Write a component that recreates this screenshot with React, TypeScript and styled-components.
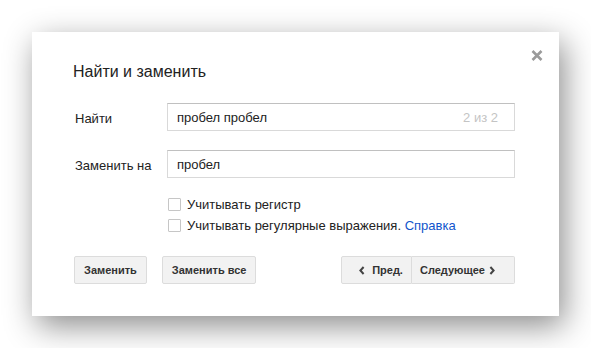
import React from "react";
import styled, { createGlobalStyle } from "styled-components";

const Global = createGlobalStyle`
  html, body {
    margin: 0;
    padding: 0;
    background: #fff;
  }
  body {
    font-family: "Liberation Sans", Arial, sans-serif;
  }
`;

const ChevronLeft = () => (
  <svg width="6" height="9" viewBox="0 0 6 9">
    <polyline points="4.6,1 1.4,4.5 4.6,8" fill="none" stroke="#444" strokeWidth="2" />
  </svg>
);

const ChevronRight = () => (
  <svg width="6" height="9" viewBox="0 0 6 9">
    <polyline points="1.4,1 4.6,4.5 1.4,8" fill="none" stroke="#444" strokeWidth="2" />
  </svg>
);

const App = () => {
  return (
    <Page>
      <Global />
      <Dialog>
        <Close aria-label="Закрыть">
          <svg width="12" height="11" viewBox="0 0 12 11">
            <path d="M1.5 1 L10.5 10 M10.5 1 L1.5 10" stroke="#9a9a9a" strokeWidth="2.6" />
          </svg>
        </Close>
        <Title>Найти и заменить</Title>
        <Form>
          <Label>Найти</Label>
          <Field>
            <span>пробел пробел</span>
            <Count>2 из 2</Count>
          </Field>
          <Label>Заменить на</Label>
          <Field>
            <span>пробел</span>
          </Field>
          <Options>
            <Option>
              <Box />
              Учитывать регистр
            </Option>
            <Option>
              <Box />
              Учитывать регулярные выражения.&nbsp;<Help href="#">Справка</Help>
            </Option>
          </Options>
        </Form>
        <Actions>
          <Button>Заменить</Button>
          <Button>Заменить все</Button>
          <Pair>
            <PairButton $pad="0 8px 0 17px" $gap={7}>
              <ChevronLeft />
              Пред.
            </PairButton>
            <PairButton $pad="0 19px 0 8px" $gap={4} $joined>
              Следующее
              <ChevronRight />
            </PairButton>
          </Pair>
        </Actions>
      </Dialog>
    </Page>
  );
};
export default App;

const Page = styled.div`
  padding: 32px 0 0 32px;
  height: 348px;
  box-sizing: border-box;
`;
const Dialog = styled.div`
  position: relative;
  width: 527px;
  height: 284px;
  box-sizing: border-box;
  padding: 30px 44px 32px 41px;
  background: #fff;
  box-shadow: 5px 10px 30px rgba(0, 0, 0, 0.45);
  color: #222;
`;
const Close = styled.div`
  position: absolute;
  top: 18px;
  right: 16px;
  display: flex;
  cursor: pointer;
`;
const Title = styled.div`
  font-size: 16px;
  line-height: 20px;
  color: #222;
`;
const Form = styled.div`
  display: grid;
  grid-template-columns: 94px 348px;
  row-gap: 19px;
  margin-top: 21px;
`;
const Label = styled.div`
  font-size: 13px;
  line-height: 16px;
  padding: 8px 0 0 2px;
  color: #222;
`;
const Field = styled.div`
  display: flex;
  align-items: center;
  justify-content: space-between;
  height: 28px;
  box-sizing: border-box;
  padding: 0 16px 0 9px;
  border: 1px solid #d9d9d9;
  border-top-color: #c0c0c0;
  font-size: 13px;
  color: #222;
`;
const Count = styled.span`
  color: #c4c4c4;
`;
const Options = styled.div`
  grid-column: 2;
  margin-top: -3px;
  display: flex;
  flex-direction: column;
`;
const Option = styled.label`
  display: flex;
  align-items: center;
  height: 21px;
  font-size: 13px;
  color: #222;
`;
const Box = styled.span`
  width: 13px;
  height: 13px;
  box-sizing: border-box;
  margin: 0 6px 0 1px;
  border: 1px solid #c6c6c6;
  border-radius: 1px;
  background: #fff;
`;
const Help = styled.a`
  color: #15c;
  text-decoration: none;
`;
const Actions = styled.div`
  display: flex;
  gap: 15px;
  margin-top: 20px;
  padding-left: 1px;
`;
const Button = styled.div`
  display: flex;
  align-items: center;
  height: 28px;
  box-sizing: border-box;
  padding: 0 9px;
  background: #f2f2f2;
  border: 1px solid #dcdcdc;
  border-radius: 2px;
  font-size: 11px;
  font-weight: bold;
  color: #333;
  cursor: default;
`;
const Pair = styled.div`
  display: flex;
  margin-left: auto;
`;
const PairButton = styled(Button)<{ $pad: string; $gap: number; $joined?: boolean }>`
  padding: ${(p) => p.$pad};
  gap: ${(p) => p.$gap}px;
  border-radius: ${(p) => (p.$joined ? "0 2px 2px 0" : "2px 0 0 2px")};
  ${(p) => (p.$joined ? "border-left: none;" : "")}
`;
